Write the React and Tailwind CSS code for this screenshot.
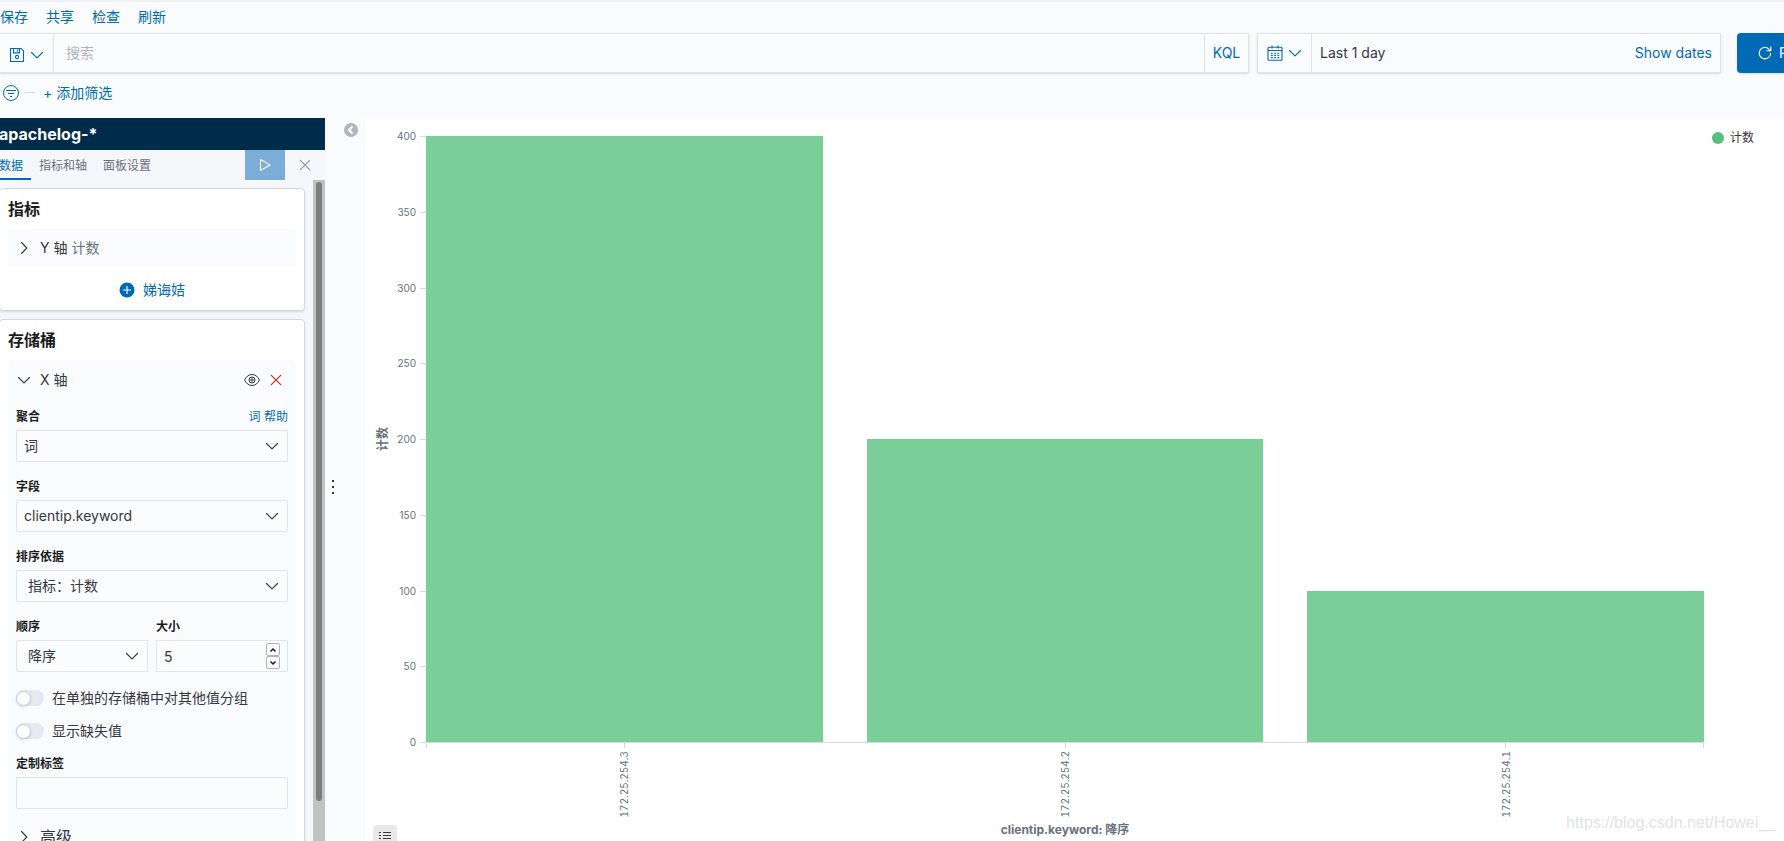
import React from 'react';

const bars = [
    { label: '172.25.254.3', value: 400 },
    { label: '172.25.254.2', value: 200 },
    { label: '172.25.254.1', value: 100 },
];
const ticks = [400, 350, 300, 250, 200, 150, 100, 50, 0];

function Chevron({ className = '' }) {
    return (
        <svg viewBox="0 0 16 16" className={`size-4 shrink-0 fill-none stroke-current ${className}`} strokeWidth="1.1" strokeLinecap="round" strokeLinejoin="round">
            <path d="M2.5 5.5 8 10.8l5.5-5.3" />
        </svg>
    );
}

function Cross() {
    return (
        <svg viewBox="0 0 16 16" className="size-4 fill-none stroke-current" strokeWidth="1.1" strokeLinecap="round">
            <path d="m3.3 3.3 9.4 9.4M12.7 3.3l-9.4 9.4" />
        </svg>
    );
}

function SelectBox({ id, value, className }) {
    return (
        <div className="relative">
            <select id={id} className={`block h-8 w-full appearance-none rounded-xs border border-[#e0e4ee] bg-[#fbfcfd] pr-10 text-sm text-[#343741] ${className}`}>
                <option>{value}</option>
            </select>
            <Chevron className="pointer-events-none absolute right-2 top-2 text-[#343741]" />
        </div>
    );
}

function Label({ htmlFor, children }) {
    return (
        <label htmlFor={htmlFor} className="mb-1 block text-xs leading-[18px] font-bold text-[#1a1c21]">{children}</label>
    );
}

function Switch({ label }) {
    return (
        <label className="flex h-5 items-center gap-2 text-sm text-[#343741]">
            <input type="checkbox" role="switch" className="sr-only" />
            <span className="flex h-4 w-7 shrink-0 items-center rounded-full bg-[#e6e9f1]">
                <span className="size-[15px] rounded-full border border-[#c9cbcd] bg-white shadow-sm" />
            </span>
            {label}
        </label>
    );
}

function TopBar() {
    return (
        <header className="shrink-0 border-t-2 border-[#f1f2f5]">
            <nav className="flex h-[31px] items-center gap-[18px] pb-0.5 text-sm text-[#006bb4]">
                <a href="#">保存</a>
                <a href="#">共享</a>
                <a href="#">检查</a>
                <a href="#">刷新</a>
            </nav>
            <div className="-ml-px flex h-10">
                <div className="flex flex-1 border border-[#e0e4ea] bg-[#fbfcfd] shadow-sm">
                    <button aria-label="保存的查询" className="flex w-[54px] items-center justify-center gap-1 border-r border-[#e0e4ea] pt-1 text-[#006bb4]">
                        <svg viewBox="0 0 16 16" className="size-4 fill-none stroke-current" strokeWidth="1.1">
                            <path d="M1.5 1.5h10.6l2.4 2.4v10.6h-13zM4.5 1.5v4.4h6V1.5M8.5 2.5v2" />
                            <circle cx="8" cy="10" r="1.6" />
                        </svg>
                        <Chevron />
                    </button>
                    <input aria-label="搜索" placeholder="搜索" className="min-w-0 flex-1 px-3 text-sm outline-none placeholder:text-[#b0b4bc]" />
                    <button className="w-11 border-l border-[#e0e4ea] text-sm text-[#006bb4]">KQL</button>
                </div>
                <div className="ml-2 flex w-[464px] border border-[#e0e4ea] bg-[#fbfcfd] shadow-sm">
                    <button aria-label="日期" className="flex w-[54px] items-center justify-center gap-1 border-r border-[#e0e4ea] text-[#006bb4]">
                        <svg viewBox="0 0 16 16" className="size-4 fill-none stroke-current" strokeWidth="1.1">
                            <rect x="1" y="2.2" width="14" height="13" rx="1" />
                            <path d="M1 5.5h14M5 .5v3M11 .5v3" />
                            <path d="M4 8.2h8.5M4 10.4h8.5M4 12.6h8.5" strokeDasharray="1.8 1.4" />
                        </svg>
                        <Chevron />
                    </button>
                    <span className="flex flex-1 items-center pl-2 text-sm text-[#343741]">Last 1 day</span>
                    <button className="pr-2 text-sm text-[#006bb4]">Show dates</button>
                </div>
                <button className="-mr-[65px] ml-4 flex w-28 shrink-0 items-center gap-1.5 rounded-sm bg-[#006bb4] pl-5 text-sm text-white shadow-sm">
                    <svg viewBox="0 0 16 16" className="size-4 fill-none stroke-current" strokeWidth="1.1" strokeLinecap="round" strokeLinejoin="round">
                        <path d="M13.6 8.2A5.7 5.7 0 1 1 11.6 3.8l1.9 1.7M13.8 1.8v3.9H10" />
                    </svg>
                    Refresh
                </button>
            </div>
            <div className="flex h-[45px] items-center pb-1.5 pl-[3px] text-sm text-[#006bb4]">
                <button aria-label="筛选选项">
                    <svg viewBox="0 0 16 16" className="size-4 fill-none stroke-current" strokeWidth="1">
                        <circle cx="8" cy="8" r="7.5" />
                        <path d="M3 5.5h10M5 8.5h6M7 11.5h2" />
                    </svg>
                </button>
                <span className="ml-1.5 h-px w-2.5 bg-[#d3dae6]" />
                <button className="ml-2">+ 添加筛选</button>
            </div>
        </header>
    );
}

function Sidebar() {
    return (
        <aside className="flex w-[325px] shrink-0 flex-col bg-[#f5f7fa]">
            <h1 className="flex h-8 shrink-0 items-center bg-[#002b49] text-base font-bold text-white">
                <span className="-ml-px">apachelog-*</span>
            </h1>
            <div className="flex h-[30px] shrink-0 text-xs text-[#69707d]">
                <div role="tablist" className="-ml-px flex flex-1">
                    <button role="tab" aria-selected="true" className="border-b-2 border-[#006bb4] pr-2 pt-1 text-[#006bb4]">数据</button>
                    <button role="tab" aria-selected="false" className="px-2 pt-0.5">指标和轴</button>
                    <button role="tab" aria-selected="false" className="px-2 pt-0.5">面板设置</button>
                </div>
                <button aria-label="应用" className="flex w-10 items-center justify-center bg-[#7aaed8] text-white">
                    <svg viewBox="0 0 16 16" className="size-4 fill-none stroke-current" strokeWidth="1.1" strokeLinejoin="round">
                        <path d="M3.5 2.5v11L13 8z" />
                    </svg>
                </button>
                <button aria-label="关闭" className="flex w-10 items-center justify-center text-[#8d929c]">
                    <Cross />
                </button>
            </div>

            <div className="flex min-h-0 flex-1">
                <div className="-ml-px flex-1 overflow-hidden pr-2 pt-2">
                    {/* Metrics */}
                    <section className="mb-2 rounded-sm border border-[#d3dae6] bg-white px-2 shadow-sm">
                        <h2 className="flex h-10 items-center text-base font-bold text-[#1a1c21]">指标</h2>
                        <button className="flex h-[37px] w-full items-center gap-2 rounded-sm bg-[#fafbfd] px-2 text-left text-sm text-[#343741]">
                            <Chevron className="-rotate-90" />
                            <span>Y 轴 <span className="text-[#69707d]">计数</span></span>
                        </button>
                        <button className="mx-auto flex h-11 items-center gap-2 pt-1 text-sm text-[#006bb4]">
                            <svg viewBox="0 0 16 16" className="size-4">
                                <circle cx="8" cy="8" r="7.5" fill="#006bb4" />
                                <path d="M8 4v8M4 8h8" stroke="#fff" strokeWidth="1.1" />
                            </svg>
                            娣诲姞
                        </button>
                    </section>

                    {/* Buckets */}
                    <section className="rounded-sm border border-[#d3dae6] bg-white px-2 shadow-sm">
                        <h2 className="flex h-10 items-center text-base font-bold text-[#1a1c21]">存储桶</h2>
                        <div className="rounded-sm bg-[#fafbfd] px-2 pb-4">
                            <div className="flex h-10 items-center text-sm text-[#343741]">
                                <button className="flex flex-1 items-center gap-2">
                                    <Chevron />
                                    X 轴
                                </button>
                                <button aria-label="禁用聚合" className="mr-2">
                                    <svg viewBox="0 0 16 16" className="size-4 fill-none stroke-current" strokeWidth="1">
                                        <path d="M.6 8C2 4.600 4.800 2.500 8 2.500S14 4.600 15.400 8C14 11.400 11.200 13.500 8 13.500S2 11.400.6 8z" />
                                        <circle cx="8" cy="8" r="3" />
                                        <circle cx="8" cy="8" r="1.200" />
                                    </svg>
                                </button>
                                <button aria-label="移除" className="mr-1 text-[#bd271e]">
                                    <Cross />
                                </button>
                            </div>
                            <div className="mt-2 flex justify-between">
                                <Label htmlFor="agg">聚合</Label>
                                <a href="#" className="text-xs leading-[18px] text-[#006bb4]">词 帮助</a>
                            </div>
                            <SelectBox id="agg" value="词" className="pl-[7px]" />
                            <div className="mt-4">
                                <Label htmlFor="field">字段</Label>
                                <SelectBox id="field" value="clientip.keyword" className="pl-[7px]" />
                            </div>
                            <div className="mt-4">
                                <Label htmlFor="orderBy">排序依据</Label>
                                <SelectBox id="orderBy" value="指标：计数" className="pl-[11px]" />
                            </div>
                            <div className="mt-4 grid grid-cols-2 gap-2">
                                <div>
                                    <Label htmlFor="order">顺序</Label>
                                    <SelectBox id="order" value="降序" className="pl-[11px]" />
                                </div>
                                <div>
                                    <Label htmlFor="size">大小</Label>
                                    <div className="relative">
                                        <input id="size" type="number" defaultValue="5" className="block h-8 w-full rounded-xs border border-[#e0e4ee] bg-[#fbfcfd] pl-[7px] text-sm text-[#343741] [appearance:textfield]" />
                                        <div className="absolute right-2 top-[3px] flex flex-col text-[#1a1c21]">
                                            <button aria-label="增加" className="flex h-[13px] w-3.5 items-center justify-center rounded-xs border border-[#b3b3b0] bg-[#fdfdfd]">
                                                <svg viewBox="0 0 8 6" className="h-1.5 w-2 fill-none stroke-current" strokeWidth="1.5"><path d="m1.500 4.500 2.500-2.500 2.500 2.500" /></svg>
                                            </button>
                                            <button aria-label="减少" className="flex h-[13px] w-3.5 items-center justify-center rounded-xs border border-[#b3b3b0] bg-[#fdfdfd]">
                                                <svg viewBox="0 0 8 6" className="h-1.5 w-2 fill-none stroke-current" strokeWidth="1.5"><path d="m1.500 1.500 2.500 2.500 2.500-2.500" /></svg>
                                            </button>
                                        </div>
                                    </div>
                                </div>
                            </div>
                            <div className="mt-4 mb-3.5 flex flex-col gap-[13px]">
                                <Switch label="在单独的存储桶中对其他值分组" />
                                <Switch label="显示缺失值" />
                            </div>
                            <Label htmlFor="customLabel">定制标签</Label>
                            <input id="customLabel" type="text" className="block h-8 w-full rounded-xs border border-[#e0e4ee] bg-[#fbfcfd] px-2 text-sm" />
                            <button className="mt-4 flex items-center gap-2 text-base text-[#343741]">
                                <Chevron className="-rotate-90" />
                                高级
                            </button>
                        </div>
                    </section>
                </div>
                <div className="flex w-3 justify-center bg-[#c1c3c2] pt-0.5">
                    <div className="h-[94%] w-1.5 rounded-full bg-[#7b7e7e]" />
                </div>
            </div>
        </aside>
    );
}

function Chart() {
    return (
        <main className="relative flex min-w-0 flex-1 bg-white pt-[18px]">
            <div className="flex min-w-0 flex-1 flex-col">
                <div className="flex min-h-0 flex-1">
                    <div className="flex w-[61px] justify-between pl-2.5">
                        <div className="flex items-center text-xs font-bold text-[#69707d]">
                            <span className="rotate-180 [writing-mode:vertical-rl] [text-orientation:sideways]">计数</span>
                        </div>
                        <div className="-my-[7px] flex flex-col justify-between">
                            {ticks.map((t) => (
                                <div key={t} className="flex h-[15px] items-center justify-end gap-1 text-[10px] text-[#69707d]">
                                    {t}
                                    <span className="h-px w-1.5 bg-[#d8d9dc]" />
                                </div>
                            ))}
                        </div>
                    </div>
                    <div className="flex flex-1 items-end gap-11 border-b border-[#d8d9dc]">
                        {bars.map((b) => (
                            <div key={b.label} className="flex-1 bg-[#79cf97]" style={{ height: `${b.value / 4}%` }} />
                        ))}
                    </div>
                </div>
                <div className="ml-[61px] flex h-[98px] flex-col">
                    <div className="flex justify-between">
                        <span className="h-[5px] w-px bg-[#d8d9dc]" />
                        <span className="h-[5px] w-px bg-[#d8d9dc]" />
                    </div>
                    <div className="-mt-[5px] flex h-[79px] gap-11">
                        {bars.map((b) => (
                            <div key={b.label} className="flex flex-1 flex-col items-center text-[10px] leading-[14px] text-[#69707d] tabular-nums">
                                <span className="mb-[3px] h-[5px] w-px bg-[#d8d9dc]" />
                                <span className="rotate-180 [writing-mode:vertical-rl]">{b.label}</span>
                            </div>
                        ))}
                    </div>
                    <p className="text-center text-xs font-bold text-[#69707d]">clientip.keyword: 降序</p>
                </div>
            </div>
            <div className="-mt-2 w-20 pl-2">
                <button className="flex items-center gap-1.5 text-xs leading-5 text-[#343741]">
                    <span className="size-3 rounded-full bg-[#57c17b]" />
                    计数
                </button>
            </div>
            <button aria-label="切换图例" className="absolute -bottom-2 left-2 flex size-6 items-center justify-center rounded-sm bg-[#e9e9ea] text-[#343741]">
                <svg viewBox="0 0 12 12" className="size-3 fill-none stroke-current" strokeWidth="1">
                    <path d="M0 1.500h2M4 1.500h8M0 4.500h2M4 4.500h8M0 7.500h2M4 7.500h8M0 10.500h2M4 10.500h8" />
                </svg>
            </button>
            <p className="absolute bottom-1.5 right-2 font-['Liberation_Sans',sans-serif] text-base text-[#e3e3e5]">https://blog.csdn.net/Howei__</p>
        </main>
    );
}

export default function App() {
    return (
        <div className="flex h-screen flex-col overflow-hidden bg-[#fafbfd] font-['Inter','Noto_Sans_CJK_SC',sans-serif]">
            <TopBar />
            <div className="flex min-h-0 flex-1">
                <Sidebar />
                <div className="flex w-10 shrink-0 justify-between pr-[7px]">
                    <div className="flex w-4 items-center justify-center pt-3.5">
                        <svg viewBox="0 0 2 14" className="h-3.5 w-0.5 fill-[#343741]">
                            <path d="M0 0h2v2H0zM0 6h2v2H0zM0 12h2v2H0z" />
                        </svg>
                    </div>
                    <button aria-label="折叠侧边栏" className="flex h-6 items-center">
                        <svg viewBox="0 0 14 14" className="size-3.5">
                            <circle cx="7" cy="7" r="7" fill="#b2b4b8" />
                            <path d="M8.500 3.500 5 7l3.500 3.500" fill="none" stroke="#fff" strokeWidth="2" />
                        </svg>
                    </button>
                </div>
                <Chart />
            </div>
        </div>
    );
}
